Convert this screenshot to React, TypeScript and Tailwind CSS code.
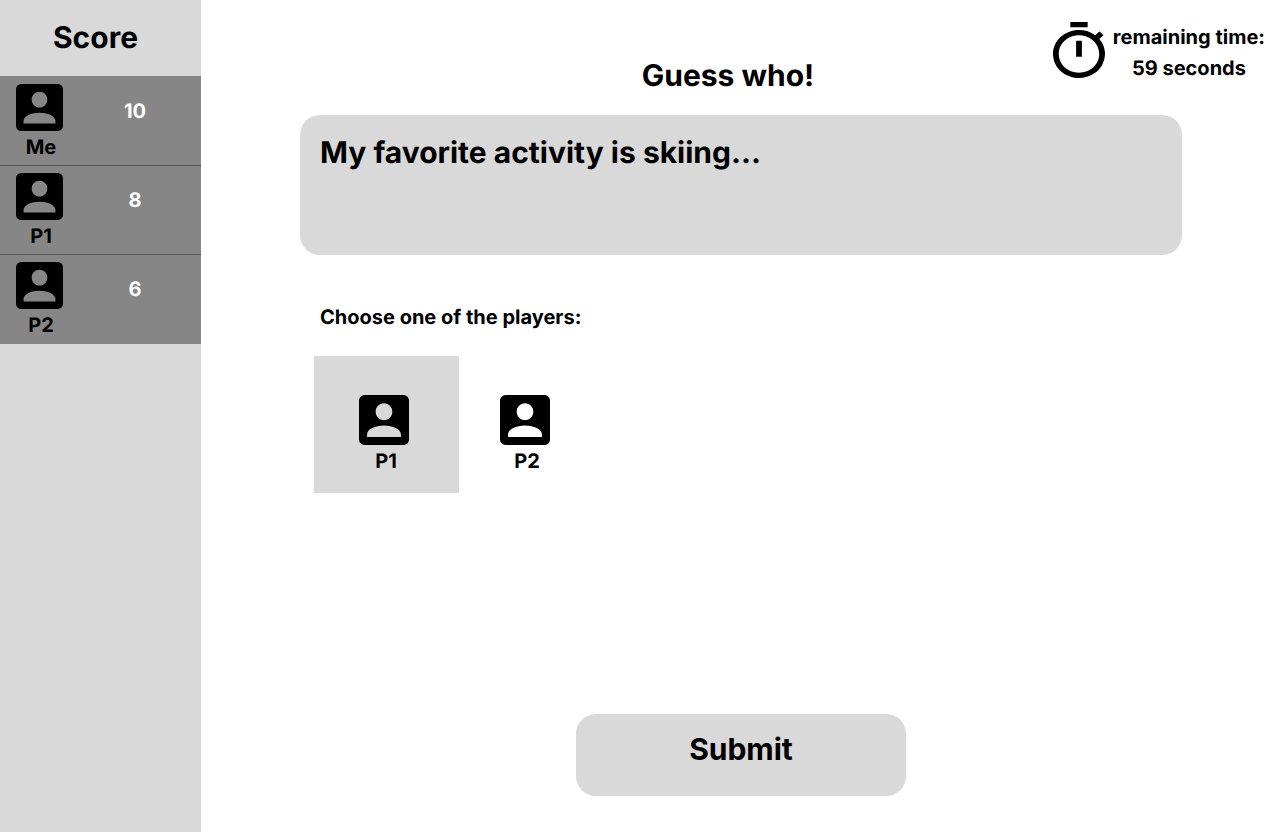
import { useState } from "react";

type Player = { name: string; score: number };

const scores: Player[] = [
  { name: "Me", score: 10 },
  { name: "P1", score: 8 },
  { name: "P2", score: 6 },
];

const choices = ["P1", "P2"];

function AccountIcon({ className }: { className: string }) {
  return (
    <svg viewBox="3 3 18 18" fill="currentColor" aria-hidden="true" className={className}>
      <path d="M3 5v14a2 2 0 0 0 2 2h14c1.1 0 2-.9 2-2V5c0-1.1-.9-2-2-2H5a2 2 0 0 0-2 2zm12 4c0 1.66-1.34 3-3 3s-3-1.34-3-3 1.34-3 3-3 3 1.34 3 3zm-9.1 8.2c0-1.9 2.9-3.2 6.1-3.2s6.1 1.3 6.1 3.2v.9H5.9v-.9z" />
    </svg>
  );
}

function TimerIcon({ className }: { className: string }) {
  return (
    <svg viewBox="3 1 18 21" preserveAspectRatio="none" fill="currentColor" aria-hidden="true" className={className}>
      <path d="M9 1h6v2H9zm10.03 6.39 1.42-1.42c-.43-.51-.9-.99-1.41-1.41l-1.42 1.42A8.962 8.962 0 0 0 12 4c-4.97 0-9 4.03-9 9s4.02 9 9 9a8.994 8.994 0 0 0 7.03-14.61zM13 14h-2V8h2v6zm-1 6c-3.87 0-7-3.13-7-7s3.13-7 7-7 7 3.13 7 7-3.13 7-7 7z" />
    </svg>
  );
}

function ScoreBoard() {
  return (
    <aside className="w-[201px] shrink-0 bg-[#d9d9d9]">
      <h2 className="py-5 pr-2.5 text-center text-[30px] leading-9">Score</h2>
      <ul className="bg-[#868686] pb-px">
        {scores.map((player) => (
          <li
            key={player.name}
            className="flex border-t border-[#555555] pt-[7px] pb-1.5 pl-[15px] first:border-[#868686]"
          >
            <div className="flex w-12 flex-col items-center">
              <AccountIcon className="size-[47px]" />
              <span className="mt-1 pl-1 leading-6">{player.name}</span>
            </div>
            <span className="flex-1 pt-[15px] pl-1.5 text-center leading-6 text-white">{player.score}</span>
          </li>
        ))}
      </ul>
    </aside>
  );
}

export default function App() {
  const [choice, setChoice] = useState("P1");

  return (
    <div className="flex min-h-screen bg-white font-['Inter',sans-serif] text-xl font-bold text-black [text-rendering:geometricPrecision]">
      <ScoreBoard />
      <main className="flex min-w-0 flex-1 flex-col pb-9">
        <header className="grid grid-cols-[1fr_auto_1fr] pr-[15px]">
          <h1 className="col-start-2 pt-[58px] pr-2.5 text-[30px] leading-9">Guess who!</h1>
          <div className="flex items-start justify-end gap-2 pt-[22px]">
            <TimerIcon className="h-14 w-[52px] shrink-0" />
            <p className="text-center leading-[31px]">
              remaining time:
              <br />
              59 seconds
            </p>
          </div>
        </header>
        <form
          className="mr-[98px] ml-[99px] mt-[21px] flex flex-1 flex-col"
          onSubmit={(event) => event.preventDefault()}
        >
          <p className="min-h-[140px] rounded-[20px] bg-[#d9d9d9] px-5 pt-5 text-[30px] leading-9">
            My favorite activity is skiing...
          </p>
          <fieldset className="mt-[50px]">
            <legend className="pl-5 leading-6">Choose one of the players:</legend>
            <div className="mt-[27px] flex -space-x-1 pl-3.5">
              {choices.map((name) => (
                <label
                  key={name}
                  className="relative w-[145px] cursor-pointer pt-[39px] pb-5 pl-[45px] has-checked:bg-[#d9d9d9]"
                >
                  <input
                    type="radio"
                    name="player"
                    value={name}
                    checked={choice === name}
                    onChange={() => setChoice(name)}
                    className="sr-only"
                  />
                  <span className="flex w-[50px] flex-col items-center">
                    <AccountIcon className="size-[50px]" />
                    <span className="mt-1 pl-1 leading-6">{name}</span>
                  </span>
                </label>
              ))}
            </div>
          </fieldset>
          <button
            type="submit"
            className="mt-auto w-[330px] cursor-pointer self-center rounded-[20px] bg-[#d9d9d9] pt-[17px] pb-[29px] text-[30px] leading-9"
          >
            Submit
          </button>
        </form>
      </main>
    </div>
  );
}
